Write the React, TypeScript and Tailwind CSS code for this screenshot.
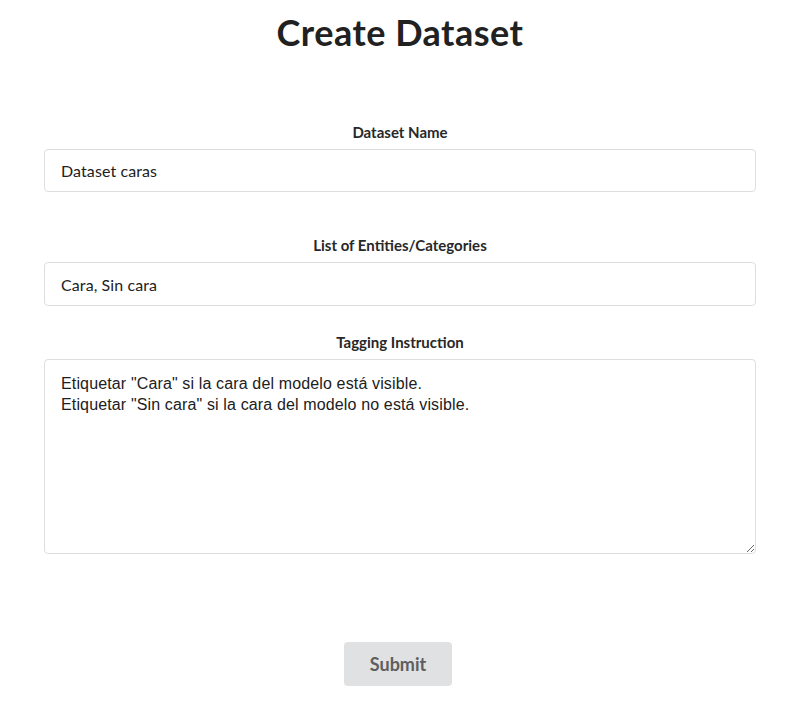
import React from "react";

export default function App() {
  return (
    <div className="min-h-[713px] bg-white font-['Lato',sans-serif] text-[#212121]">
      <h1 className="mt-[10px] text-center text-[36px] font-bold leading-[44px] tracking-[0.5px] text-[#212121]">
        Create Dataset
      </h1>
      <form className="mx-[44px] mt-[69px] flex flex-col" onSubmit={(e) => e.preventDefault()}>
        <label className="mb-[8px] text-center text-[15px] font-bold leading-[18px] text-[#282828]">
          Dataset Name
        </label>
        <input
          defaultValue="Dataset caras"
          className="h-[43px] w-full rounded-[4px] border border-[#dedede] px-[16px] text-[16px] tracking-[0.1px] text-[#212121] outline-none font-['Lato',sans-serif]"
        />
        <label className="mb-[8px] mt-[44px] text-center text-[15px] font-bold leading-[18px] text-[#282828]">
          List of Entities/Categories
        </label>
        <input
          defaultValue="Cara, Sin cara"
          className="h-[44px] w-full rounded-[4px] border border-[#dedede] px-[16px] text-[16px] tracking-[0.1px] text-[#212121] outline-none font-['Lato',sans-serif]"
        />
        <label className="mb-[8px] mt-[27px] text-center text-[15px] font-bold leading-[18px] text-[#282828]">
          Tagging Instruction
        </label>
        <textarea
          defaultValue={'Etiquetar "Cara" si la cara del modelo está visible.\nEtiquetar "Sin cara" si la cara del modelo no está visible.'}
          className="h-[195px] w-full rounded-[4px] border border-[#dedede] px-[16px] pb-[11px] pt-[13px] text-[16px] leading-[21px] tracking-[0.14px] text-[#212121] outline-none font-['Liberation_Sans',Arial,sans-serif]"
        />
        <div className="mt-[88px] flex justify-center">
          <button
            type="submit"
            className="ml-[-4px] h-[44px] w-[108px] rounded-[4px] bg-[#e0e1e2] text-[18px] font-bold text-[#5e5e5e] font-['Lato',sans-serif]"
          >
            Submit
          </button>
        </div>
      </form>
    </div>
  );
}
